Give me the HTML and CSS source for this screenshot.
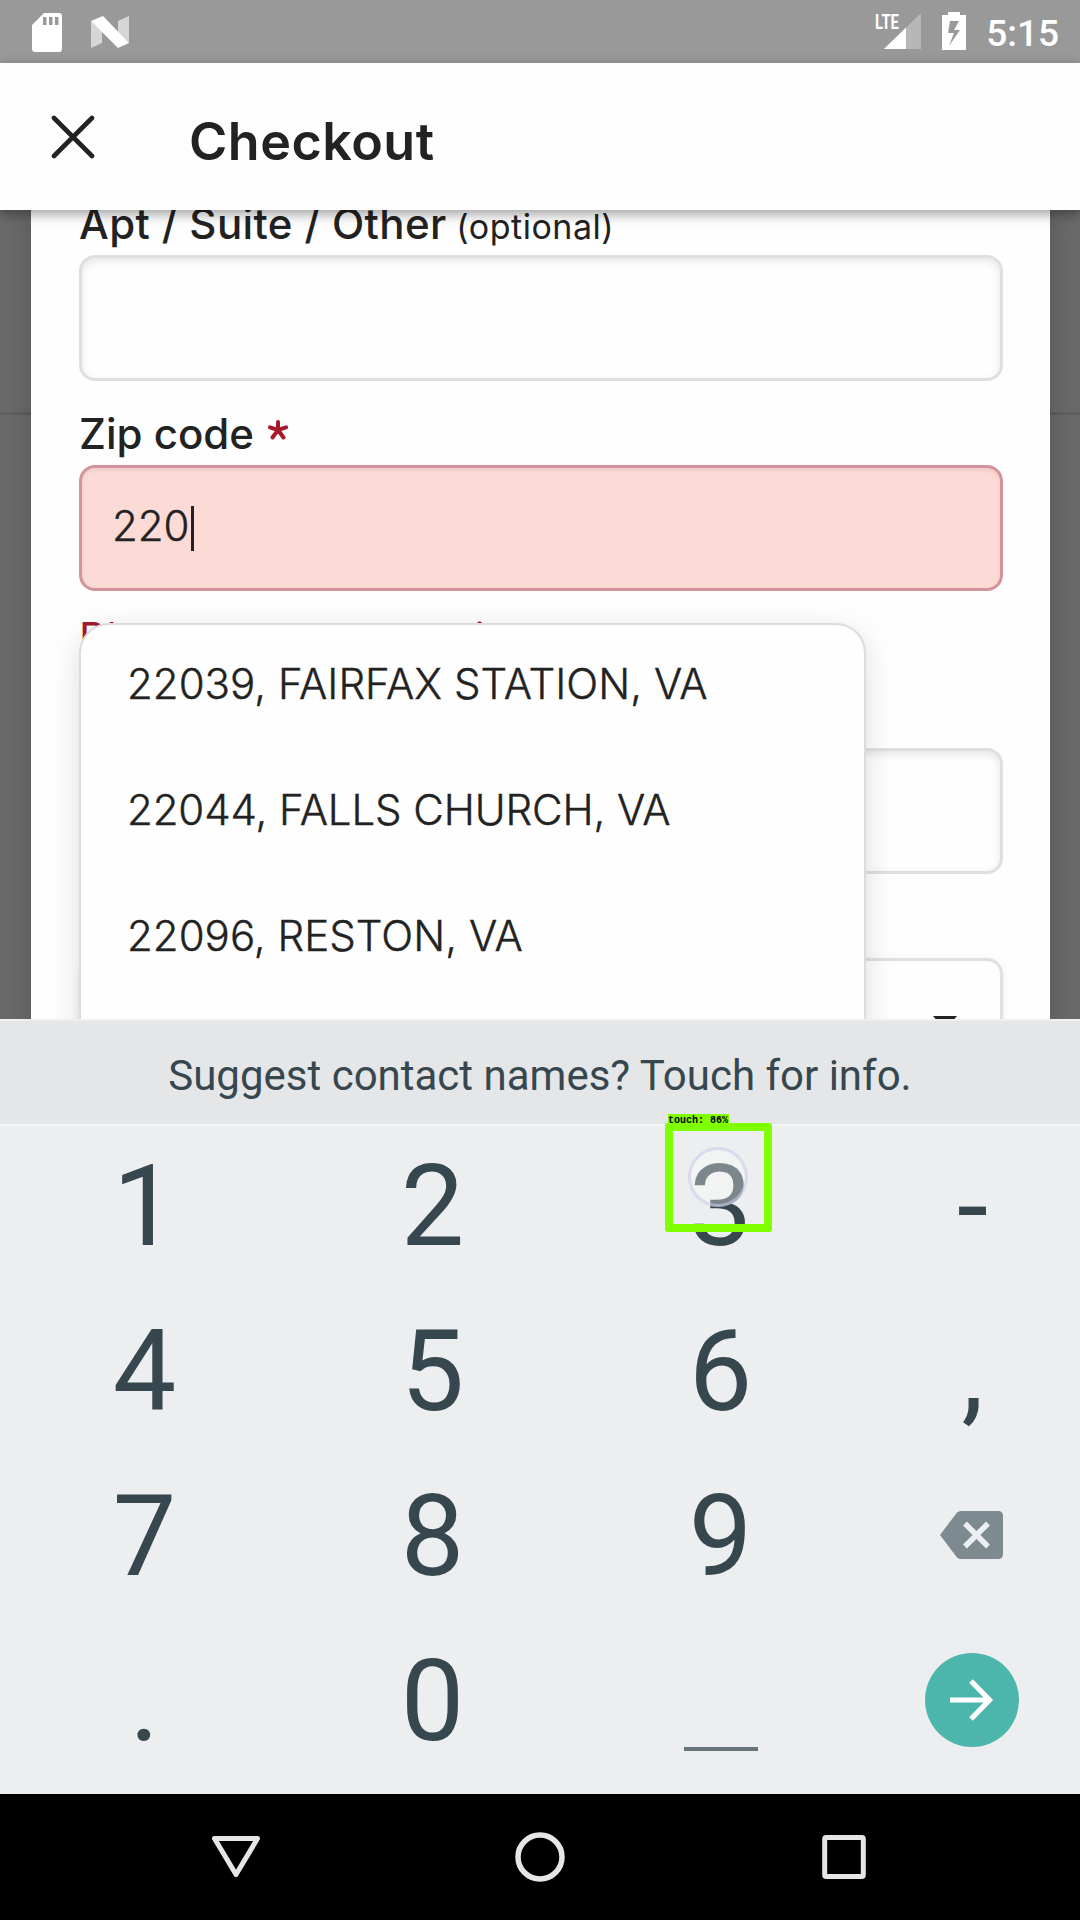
FILE: index.html
```html
<!DOCTYPE html>
<html lang="en">
<head>
<meta charset="utf-8">
<title>Checkout</title>
<link rel="stylesheet" href="styles.css">
</head>
<body>
<div class="screen">
  <div class="status-bar">
    <div class="status-group status-left">
      <svg class="icon-sd" viewBox="0 0 30 39" width="30" height="39"><path fill="#fff" fill-rule="evenodd" d="M12 0H27a3 3 0 0 1 3 3V36a3 3 0 0 1-3 3H3a3 3 0 0 1-3-3V12ZM11 4V12H14.500V4ZM17 4V12H20.500V4ZM23 4V12H26.500V4Z"/></svg>
      <svg class="icon-n" viewBox="0 0 38 32" width="38" height="32"><path fill="#fff" fill-opacity=".6" d="M0 5 11 15V27L0 32ZM27 5 38 0V27L27 17Z"/><path fill="#fff" d="M0 5 12 0 38 27 27 32Z"/></svg>
    </div>
    <div class="status-group status-right">
      <svg class="icon-signal" viewBox="0 0 46 38" width="46" height="38"><path fill="#fff" fill-opacity=".3" d="M46 1V37H9Z"/><path fill="#fff" d="M31 15.500V37H9Z"/><text class="lte" x="0" y="17" textLength="24" lengthAdjust="spacingAndGlyphs">LTE</text></svg>
      <svg class="icon-battery" viewBox="0 0 24 38" width="24" height="38"><path fill="#fff" fill-rule="evenodd" d="M6 0H18V3H24V38H0V3H6ZM8 9 6 21H12L7 34 18 18H12L17 9Z"/></svg>
      <span class="clock">5:15</span>
    </div>
  </div>

  <header class="header">
    <svg class="icon-close" viewBox="0 0 44 44" width="44" height="44"><path d="M3 3 41 41M41 3 3 41" fill="none" stroke="#222" stroke-width="4.600" stroke-linecap="round"/></svg>
    <h1 class="title">Checkout</h1>
  </header>

  <main class="content">
    <div class="page-rule"></div>
    <form class="dialog">
      <label class="label label-apt">Apt / Suite / Other <span class="optional">(optional)</span></label>
      <div class="field"></div>
      <label class="label label-zip">Zip code <svg class="required" viewBox="0 0 20 20" width="20" height="20"><path d="M10 10V2M10 10 2 7.400M10 10 18 7.400M10 10 4.500 17.500M10 10 15.500 17.500" fill="none" stroke="#a61a2e" stroke-width="4" stroke-linecap="round"/></svg></label>
      <div class="field field-error"><span class="value">220</span><span class="caret"></span></div>
      <p class="error">Please enter your zip</p>
      <div class="field"></div>
      <div class="field field-select"><svg viewBox="0 0 24 14" width="24" height="14"><path fill="#222" d="M0 0H24L12 14Z"/></svg></div>
      <ul class="suggestions">
        <li>22039, FAIRFAX STATION, VA</li>
        <li class="falls">22044, FALLS CHURCH, VA</li>
        <li>22096, RESTON, VA</li>
      </ul>
    </form>
  </main>

  <section class="keyboard">
    <div class="prompt"><span>Suggest contact names? Touch for info.</span></div>
    <div class="keys">
      <span>1</span><span>2</span><span>3</span><span>-</span>
      <span>4</span><span>5</span><span>6</span><span>,</span>
      <span>7</span><span>8</span><span>9</span>
      <span><svg class="icon-delete" viewBox="0 0 63 48" width="63" height="48"><path fill="#7d8b90" d="M17 1.500Q18.500 0 21 0H58Q63 0 63 5V43Q63 48 58 48H21Q18.500 48 17 46.500L0 24Z"/><path d="M25 12.500 48 35.500M48 12.500 25 35.500" stroke="#eceff1" stroke-width="5.500" fill="none"/></svg></span>
      <span>.</span><span>0</span><span class="space-key"><i class="space-bar"></i></span>
      <span><svg class="icon-go" viewBox="0 0 94 94" width="94" height="94"><circle cx="47" cy="47" r="47" fill="#4db6ac"/><path d="M25 47H64M46 28 64.500 47 46 66" fill="none" stroke="#fff" stroke-width="5.200"/></svg></span>
    </div>
    <div class="touch-dot"></div>
    <div class="touch-box"></div>
    <div class="touch-label">touch: 86%</div>
  </section>

  <nav class="nav-bar">
    <svg viewBox="0 0 50 44" width="50" height="44"><path d="M3.500 3.500H46.500L25 39.500Z" fill="none" stroke="#e6e6e6" stroke-width="5" stroke-linejoin="round"/></svg>
    <svg viewBox="0 0 50 50" width="50" height="50"><circle cx="25" cy="25" r="22" fill="none" stroke="#e6e6e6" stroke-width="5.500"/></svg>
    <svg viewBox="0 0 50 44" width="50" height="44"><rect x="5.700" y="2.500" width="38.600" height="39" rx="1.500" fill="none" stroke="#e6e6e6" stroke-width="5"/></svg>
  </nav>
</div>
</body>
</html>
```
FILE: styles.css
```css
* { box-sizing: border-box; }
body { margin: 0; font-family: Inter, "Liberation Sans", sans-serif; color: #222; }
svg { display: block; flex: none; }

.screen {
  width: 1080px;
  height: 1920px;
  display: flex;
  flex-direction: column;
  overflow: hidden;
}

.status-bar {
  height: 63px;
  background: #999;
  display: flex;
  justify-content: space-between;
  padding: 0 21px 0 32px;
}
.status-group { display: flex; align-items: flex-start; }
.status-left { gap: 29px; padding-top: 13px; }
.status-right { padding-top: 12px; }
.icon-n { margin-top: 3px; }
.icon-signal { overflow: visible; }
.icon-battery { margin-left: 21px; }
.lte { font: bold 21px Roboto, sans-serif; fill: #fff; }
.clock {
  margin-left: 20px;
  font: 500 37px/43px Roboto, sans-serif;
  color: #fff;
}

.header {
  position: relative;
  z-index: 2;
  height: 147px;
  background: #fefefe;
  display: flex;
  align-items: flex-start;
  padding: 52px 0 0 51px;
  box-shadow: 0 4px 12px rgba(0, 0, 0, .38);
}
.title {
  margin: -4px 0 0 94px;
  font-size: 52px;
  line-height: 62px;
  font-weight: 600;
  letter-spacing: .5px;
}

.content {
  position: relative;
  height: 809px;
  background: #6a6a6a;
  padding: 0 30px 0 31px;
  overflow: hidden;
}
.page-rule {
  position: absolute;
  left: 0;
  top: 202px;
  width: 100%;
  height: 3px;
  background: #5e5e5e;
}
.dialog {
  position: relative;
  height: 830px;
  background: #fefefe;
  box-shadow: 0 0 26px rgba(0, 0, 0, .2);
  padding: 0 47px 0 48px;
  display: flex;
  flex-direction: column;
}
.label {
  height: 50px;
  font-size: 42px;
  line-height: 50px;
  font-weight: 500;
  white-space: nowrap;
}
.label-apt { margin: -11px 0 6px; letter-spacing: .4px; }
.optional { font-size: 34px; font-weight: 400; letter-spacing: .5px; margin-left: -2px; }
.label-zip { margin: 28px 0 6px; display: flex; }
.required { margin: 11px 0 0 14px; }
.field {
  height: 126px;
  flex: none;
  border: 3px solid #dfdfdf;
  border-radius: 16px;
  box-shadow: inset 0 3px 8px rgba(0, 0, 0, .1);
}
.field-error {
  background: #fcdad6;
  border-color: #d4929a;
  display: flex;
  align-items: center;
  padding-left: 30px;
  box-shadow: inset 0 2px 4px rgba(0, 0, 0, .08);
}
.value {
  font-size: 42px;
  font-weight: 300;
  margin-top: -6px;
  -webkit-text-stroke: .4px #222;
}
.caret { width: 3px; height: 45px; background: #222; margin-left: 1px; }
.error {
  margin: 21px 0 86px;
  height: 50px;
  font-size: 42px;
  line-height: 51px;
  letter-spacing: .7px;
  color: #a61a2e;
  white-space: nowrap;
}
.field-select {
  margin-top: 84px;
  box-shadow: 0 2px 8px rgba(0, 0, 0, .08);
  display: flex;
  justify-content: flex-end;
  padding: 55px 43px 0 0;
}
.suggestions {
  position: absolute;
  left: 48px;
  top: 413px;
  width: 787px;
  height: 430px;
  margin: 0;
  padding: 0 0 0 46px;
  list-style: none;
  background: #fefefe;
  border: 2px solid #dcdcdc;
  border-radius: 30px;
  box-shadow: 0 8px 30px rgba(0, 0, 0, .13);
}
.suggestions li {
  height: 126px;
  font-size: 42px;
  line-height: 118px;
  font-weight: 300;
  letter-spacing: .04px;
  -webkit-text-stroke: .4px #222;
  white-space: nowrap;
}
.suggestions .falls { letter-spacing: -.1px; }

.keyboard {
  position: relative;
  height: 775px;
  background: #eceff1;
  font-family: Roboto, "Liberation Sans", sans-serif;
  color: #37474f;
}
.prompt {
  height: 105px;
  background: #e4e6e7;
  border-top: 2px solid #efefef;
  display: flex;
  align-items: center;
  justify-content: center;
  padding-top: 5px;
  font-size: 42px;
}
.keys {
  display: grid;
  grid-template-columns: 288px 288px 288px 216px;
  grid-auto-rows: 165px;
  height: 670px;
  background: #eceeef;
  box-shadow: inset 0 2px #f5f6f7;
  font-size: 113px;
}
.keys span { display: flex; align-items: center; justify-content: center; line-height: 132px; padding: 1px 0 0 1px; }
.icon-delete { margin: -5px 3px 0 0; }
.icon-go { margin: -4px 1px 0 0; }
.keys .space-key { align-items: flex-end; padding-bottom: 33px; }
.space-bar { width: 74px; height: 4px; background: #65757a; }

.touch-dot {
  position: absolute;
  left: 688px;
  top: 128px;
  width: 60px;
  height: 60px;
  border-radius: 50%;
  border: 3px solid rgba(200, 200, 228, .6);
  background: rgba(255, 255, 255, .35);
}
.touch-box {
  position: absolute;
  left: 665px;
  top: 104px;
  width: 107px;
  height: 109px;
  border: 8px solid #80ff00;
  border-radius: 3px;
}
.touch-label {
  position: absolute;
  left: 668px;
  top: 95px;
  width: 61px;
  height: 14px;
  background: #80ff00;
  color: #000;
  font: bold 10px/14px "Liberation Mono", monospace;
  white-space: pre;
}

.nav-bar {
  height: 126px;
  background: #000;
  display: flex;
  align-items: center;
  justify-content: space-between;
  padding: 0 211px;
}
```
